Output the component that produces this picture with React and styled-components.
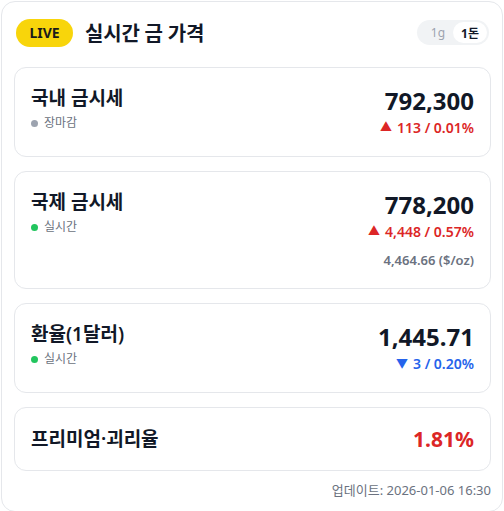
import React, { useState } from "react";
import styled, { createGlobalStyle } from "styled-components";

const GlobalStyle = createGlobalStyle`
  * { box-sizing: border-box; }
  body {
    margin: 0;
    background: #ffffff;
    font-family: "Noto Sans", "Noto Sans CJK KR", sans-serif;
    color: #111827;
  }
`;

const rows = [
  {
    id: "domestic",
    title: "국내 금시세",
    status: "장마감",
    live: false,
    price: "792,300",
    change: "113 / 0.01%",
    up: true,
  },
  {
    id: "global",
    title: "국제 금시세",
    status: "실시간",
    live: true,
    price: "778,200",
    change: "4,448 / 0.57%",
    up: true,
    extra: "4,464.66 ($/oz)",
  },
  {
    id: "fx",
    title: "환율(1달러)",
    status: "실시간",
    live: true,
    price: "1,445.71",
    change: "3 / 0.20%",
    up: false,
  },
];

export default function App() {
  const [unit, setUnit] = useState("1돈");

  return (
    <>
      <GlobalStyle />
      <Panel>
        <Header>
          <HeaderLeft>
            <LiveBadge>LIVE</LiveBadge>
            <Title>실시간 금 가격</Title>
          </HeaderLeft>
          <Toggle>
            {["1g", "1돈"].map((u) => (
              <ToggleBtn key={u} active={unit === u} onClick={() => setUnit(u)}>
                {u}
              </ToggleBtn>
            ))}
          </Toggle>
        </Header>

        <List>
          {rows.map((r) => (
            <Card key={r.id}>
              <Left>
                <CardTitle>{r.title}</CardTitle>
                <Status>
                  <Dot live={r.live} />
                  {r.status}
                </Status>
              </Left>
              <Right>
                <Price>{r.price}</Price>
                <Change up={r.up}>
                  <Arrow>{r.up ? "▲" : "▼"}</Arrow>
                  {r.change}
                </Change>
                {r.extra && <Extra>{r.extra}</Extra>}
              </Right>
            </Card>
          ))}
          <PremiumCard>
            <CardTitle>프리미엄·괴리율</CardTitle>
            <PremiumValue>1.81%</PremiumValue>
          </PremiumCard>
        </List>

        <Updated>업데이트: 2026-01-06 16:30</Updated>
      </Panel>
    </>
  );
}

const Panel = styled.div`
  margin: 1px 1px 0 1px;
  width: 502px;
  border: 1px solid #e5e7eb;
  border-radius: 14px;
  padding: 15px 11px 12px 12px;
  background: #ffffff;
`;

const Header = styled.div`
  display: flex;
  align-items: center;
  justify-content: space-between;
  padding: 1px 2px 0 2px;
  margin-bottom: 20px;
`;

const HeaderLeft = styled.div`
  display: flex;
  align-items: center;
  gap: 12px;
`;

const LiveBadge = styled.span`
  display: inline-flex;
  align-items: center;
  justify-content: center;
  width: 57px;
  height: 28px;
  border-radius: 14px;
  background: #f8d50b;
  color: #1a1a1a;
  font-size: 14px;
  font-weight: 700;
`;

const Title = styled.h1`
  margin: 0;
  font-size: 20px;
  font-weight: 700;
  color: #111827;
  letter-spacing: -0.2px;
`;

const Toggle = styled.div`
  display: flex;
  align-items: center;
  gap: 4px;
  height: 25px;
  padding: 2px 2px 2px 10px;
  border-radius: 13px;
  background: #f1f3f5;
`;

const ToggleBtn = styled.button`
  border: 0;
  height: 21px;
  padding: 0 ${(p) => (p.active ? "8px" : "4px")};
  border-radius: 11px;
  background: ${(p) => (p.active ? "#ffffff" : "transparent")};
  color: ${(p) => (p.active ? "#111827" : "#9ca3af")};
  font-family: inherit;
  font-size: 12px;
  font-weight: ${(p) => (p.active ? 700 : 400)};
  cursor: pointer;
`;

const List = styled.div`
  display: flex;
  flex-direction: column;
  gap: 14px;
`;

const Card = styled.div`
  display: flex;
  justify-content: space-between;
  align-items: flex-start;
  padding: 16px 16px 19px;
  border: 1px solid #e5e7eb;
  border-radius: 12px;
  background: #ffffff;
`;

const Left = styled.div`
  display: flex;
  flex-direction: column;
  gap: 3px;
`;

const CardTitle = styled.div`
  font-family: "Noto Sans", "Noto Sans CJK KR", sans-serif;
  font-size: 19px;
  font-weight: 600;
  color: #111827;
  line-height: 28px;
`;

const Status = styled.div`
  display: flex;
  align-items: center;
  gap: 6px;
  font-size: 12px;
  color: #6b7280;
  line-height: 16px;
`;

const Dot = styled.span`
  width: 7px;
  height: 7px;
  border-radius: 50%;
  background: ${(p) => (p.live ? "#22c55e" : "#9ca3af")};
`;

const Right = styled.div`
  display: flex;
  flex-direction: column;
  align-items: flex-end;
`;

const Price = styled.div`
  font-size: 24px;
  font-weight: 700;
  line-height: 33px;
  color: #111827;
`;

const Change = styled.div`
  margin-top: 1px;
  display: flex;
  align-items: center;
  gap: 5px;
  font-size: 14px;
  font-weight: 600;
  line-height: 19px;
  color: ${(p) => (p.up ? "#dc2626" : "#2563eb")};
`;

const Arrow = styled.span`
  font-size: 12px;
`;

const Extra = styled.div`
  margin-top: 10px;
  font-size: 13px;
  font-weight: 600;
  line-height: 18px;
  color: #6b7280;
`;

const PremiumCard = styled.div`
  display: flex;
  align-items: center;
  justify-content: space-between;
  height: 64px;
  padding: 0 16px;
  border: 1px solid #e5e7eb;
  border-radius: 12px;
  background: #ffffff;
`;

const PremiumValue = styled.div`
  font-size: 21px;
  font-weight: 700;
  color: #dc2626;
`;

const Updated = styled.div`
  margin-top: 10px;
  text-align: right;
  font-size: 13px;
  color: #6b7280;
  line-height: 18px;
`;
